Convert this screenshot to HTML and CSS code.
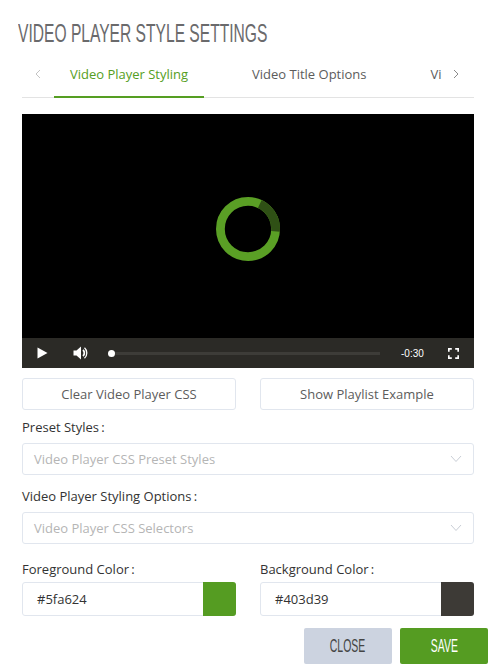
FILE: index.html
```html
<!DOCTYPE html>
<html lang="en">
<head>
    <meta charset="UTF-8">
    <title>Video Player Style Settings</title>
    <link rel="stylesheet" href="styles.css">
</head>
<body>

<div class="modal">
    <h1 class="modal-title">VIDEO PLAYER STYLE SETTINGS</h1>

    <!-- Tabs -->
    <div class="tabs">
        <span class="tab-arrow">
            <svg width="8" height="10" viewBox="0 0 8 10"><path d="M6 1 2 5l4 4" fill="none" stroke="#c4c4c4" stroke-width="1"/></svg>
        </span>
        <div class="tab-list">
            <a class="tab active">Video Player Styling</a>
            <a class="tab tab-second">Video Title Options</a>
            <a class="tab tab-third">Vi</a>
        </div>
        <span class="tab-arrow tab-arrow-right">
            <svg width="8" height="10" viewBox="0 0 8 10"><path d="M2 1l4 4-4 4" fill="none" stroke="#8a8a8a" stroke-width="1"/></svg>
        </span>
    </div>

    <!-- Player -->
    <div class="player">
        <div class="player-screen">
            <svg class="spinner" width="64" height="64" viewBox="0 0 64 64">
                <circle cx="32" cy="32" r="27.600" fill="none" stroke="#5a9f25" stroke-width="8.800"/>
                <path d="M43.800 7A27.600 27.600 0 0 1 59.500 34.400" fill="none" stroke="#2f5015" stroke-width="8.800"/>
            </svg>
        </div>
        <div class="player-bar">
            <svg class="icon-play" width="11" height="12" viewBox="0 0 11 12"><path d="M0.500 0.500 10.500 6 0.500 11.500z" fill="#fff"/></svg>
            <svg class="icon-volume" width="16" height="14" viewBox="0 0 16 14">
                <path d="M0.500 4.500H3.500L8 0.500V13.500L3.500 9.500H0.500z" fill="#fff"/>
                <path d="M10 4A4 4 0 0 1 10 10" fill="none" stroke="#fff" stroke-width="1.800"/>
                <path d="M11.500 1.800A7 7 0 0 1 11.500 12.200" fill="none" stroke="#fff" stroke-width="1.300"/>
            </svg>
            <div class="progress"><span class="progress-dot"></span></div>
            <span class="player-time">-0:30</span>
            <svg class="icon-full" width="11" height="11" viewBox="0 0 11 11">
                <path d="M0.800 3.800V0.800H3.800M7.200 0.800H10.200V3.800M10.200 7.200V10.200H7.200M3.800 10.200H0.800V7.200" fill="none" stroke="#fff" stroke-width="1.700"/>
            </svg>
        </div>
    </div>

    <div class="row row-buttons">
        <button class="btn-outline">Clear Video Player CSS</button>
        <button class="btn-outline">Show Playlist Example</button>
    </div>

    <label class="field-label first">Preset Styles&#8201;:</label>
    <div class="select">
        <span>Video Player CSS Preset Styles</span>
        <svg width="12" height="8" viewBox="0 0 12 8"><path d="M1 1 6 6.500 11 1" fill="none" stroke="#c9ced6" stroke-width="1"/></svg>
    </div>

    <label class="field-label second">Video Player Styling Options&#8201;:</label>
    <div class="select">
        <span>Video Player CSS Selectors</span>
        <svg width="12" height="8" viewBox="0 0 12 8"><path d="M1 1 6 6.500 11 1" fill="none" stroke="#c9ced6" stroke-width="1"/></svg>
    </div>

    <div class="row row-colors">
        <div class="color-field">
            <label class="field-label">Foreground Color&#8201;:</label>
            <div class="color-input">
                <span class="color-value">#5fa624</span>
                <span class="swatch swatch-fg"></span>
            </div>
        </div>
        <div class="color-field">
            <label class="field-label">Background Color&#8201;:</label>
            <div class="color-input">
                <span class="color-value">#403d39</span>
                <span class="swatch swatch-bg"></span>
            </div>
        </div>
    </div>

    <div class="modal-footer">
        <button class="btn btn-close"><span>CLOSE</span></button>
        <button class="btn btn-save"><span>SAVE</span></button>
    </div>
</div>

</body>
</html>
```

FILE: styles.css
```css
body {
    margin: 0;
    padding: 0;
    background-color: #fff;
    color: #333;
    font-family: "Open Sans", Arial, sans-serif;
    font-size: 13px;
}

.modal {
    width: 496px;
    height: 670px;
    box-sizing: border-box;
    padding: 17px 22px 0;
    overflow: hidden;
}

.modal-title {
    margin: 0 0 0 -4px;
    font-family: "Liberation Sans", sans-serif;
    font-size: 26px;
    line-height: 32px;
    font-weight: 400;
    color: #6a6a6c;
    white-space: nowrap;
    transform: scaleX(0.6);
    transform-origin: left center;
}

.tabs {
    display: flex;
    align-items: center;
    height: 48px;
    margin-top: 1px;
    border-bottom: 1px solid #e3e3e3;
    box-sizing: border-box;
}

.tab-arrow {
    flex: none;
    width: 32px;
    display: flex;
    justify-content: center;
    padding-top: 1px;
}

.tab-arrow-right {
    padding-right: 4px;
    width: 28px;
}

.tab-list {
    flex: 1;
    display: flex;
    overflow: hidden;
    height: 48px;
}

.tab {
    flex: none;
    height: 48px;
    line-height: 48px;
    box-sizing: border-box;
    font-size: 13px;
    color: #5c5c5c;
    white-space: nowrap;
}

.tab.active {
    width: 150px;
    text-align: center;
    color: #559e22;
    border-bottom: 2px solid #559e22;
}

.tab-second {
    margin-left: 48px;
}

.tab-third {
    margin-left: 64px;
}

.player {
    margin-top: 16px;
    height: 254px;
    display: flex;
    flex-direction: column;
    background: #000;
}

.player-screen {
    flex: 1;
    display: flex;
    align-items: center;
    justify-content: center;
    padding-top: 6px;
}

.player-bar {
    height: 30px;
    flex: none;
    display: flex;
    align-items: center;
    background-color: #2b2a26;
}

.icon-play {
    margin-left: 15px;
}

.icon-volume {
    margin-left: 25px;
}

.progress {
    position: relative;
    width: 271px;
    height: 3px;
    margin-left: 20px;
    background-color: #3d3c38;
}

.progress-dot {
    position: absolute;
    left: -1px;
    top: -2px;
    width: 7px;
    height: 7px;
    border-radius: 50%;
    background: #fff;
}

.player-time {
    margin-left: 21px;
    font-family: "Liberation Sans", Arial, sans-serif;
    font-size: 10px;
    color: #fff;
}

.icon-full {
    margin-left: 24px;
}

.row {
    display: flex;
    justify-content: space-between;
}

.row-buttons {
    margin-top: 10px;
}

.btn-outline {
    width: 214px;
    height: 32px;
    padding: 0;
    background: #fff;
    border: 1px solid #e1e6ee;
    border-radius: 3px;
    font-family: inherit;
    font-size: 13px;
    color: #5c5c5c;
}

.field-label {
    display: block;
    font-size: 13px;
    line-height: 18px;
    color: #333;
}

.field-label.first {
    margin-top: 8px;
    margin-bottom: 7px;
}

.field-label.second {
    margin-top: 12px;
    margin-bottom: 7px;
}

.select {
    height: 32px;
    box-sizing: border-box;
    display: flex;
    align-items: center;
    justify-content: space-between;
    padding: 0 11px;
    background: #fff;
    border: 1px solid #e1e6ee;
    border-radius: 3px;
    font-size: 13px;
    color: #b5b5b5;
}

.row-colors {
    margin-top: 16px;
}

.color-field {
    width: 214px;
}

.color-field .field-label {
    margin-bottom: 4px;
}

.color-input {
    height: 34px;
    box-sizing: border-box;
    display: flex;
    align-items: stretch;
    border: 1px solid #e1e6ee;
    border-radius: 3px;
}

.color-value {
    flex: 1;
    padding-left: 14px;
    line-height: 32px;
    font-size: 13px;
    color: #333;
}

.swatch {
    flex: none;
    width: 33px;
    margin: -1px -1px -1px 0;
    border-radius: 0 3px 3px 0;
}

.swatch-fg {
    background-color: #559c22;
}

.swatch-bg {
    background-color: #3d3a36;
}

.modal-footer {
    display: flex;
    justify-content: flex-end;
    gap: 8px;
    margin: 12px -14px 0 0;
}

.btn {
    width: 88px;
    height: 36px;
    padding: 0;
    border: none;
    border-radius: 2px;
    font-family: "Liberation Sans", sans-serif;
    font-size: 18px;
}

.btn span {
    display: inline-block;
    transform: scaleX(0.58);
}

.btn-close {
    background-color: #ccd3e0;
    color: #444;
}

.btn-save {
    background-color: #559c22;
    color: #fff;
}
```
